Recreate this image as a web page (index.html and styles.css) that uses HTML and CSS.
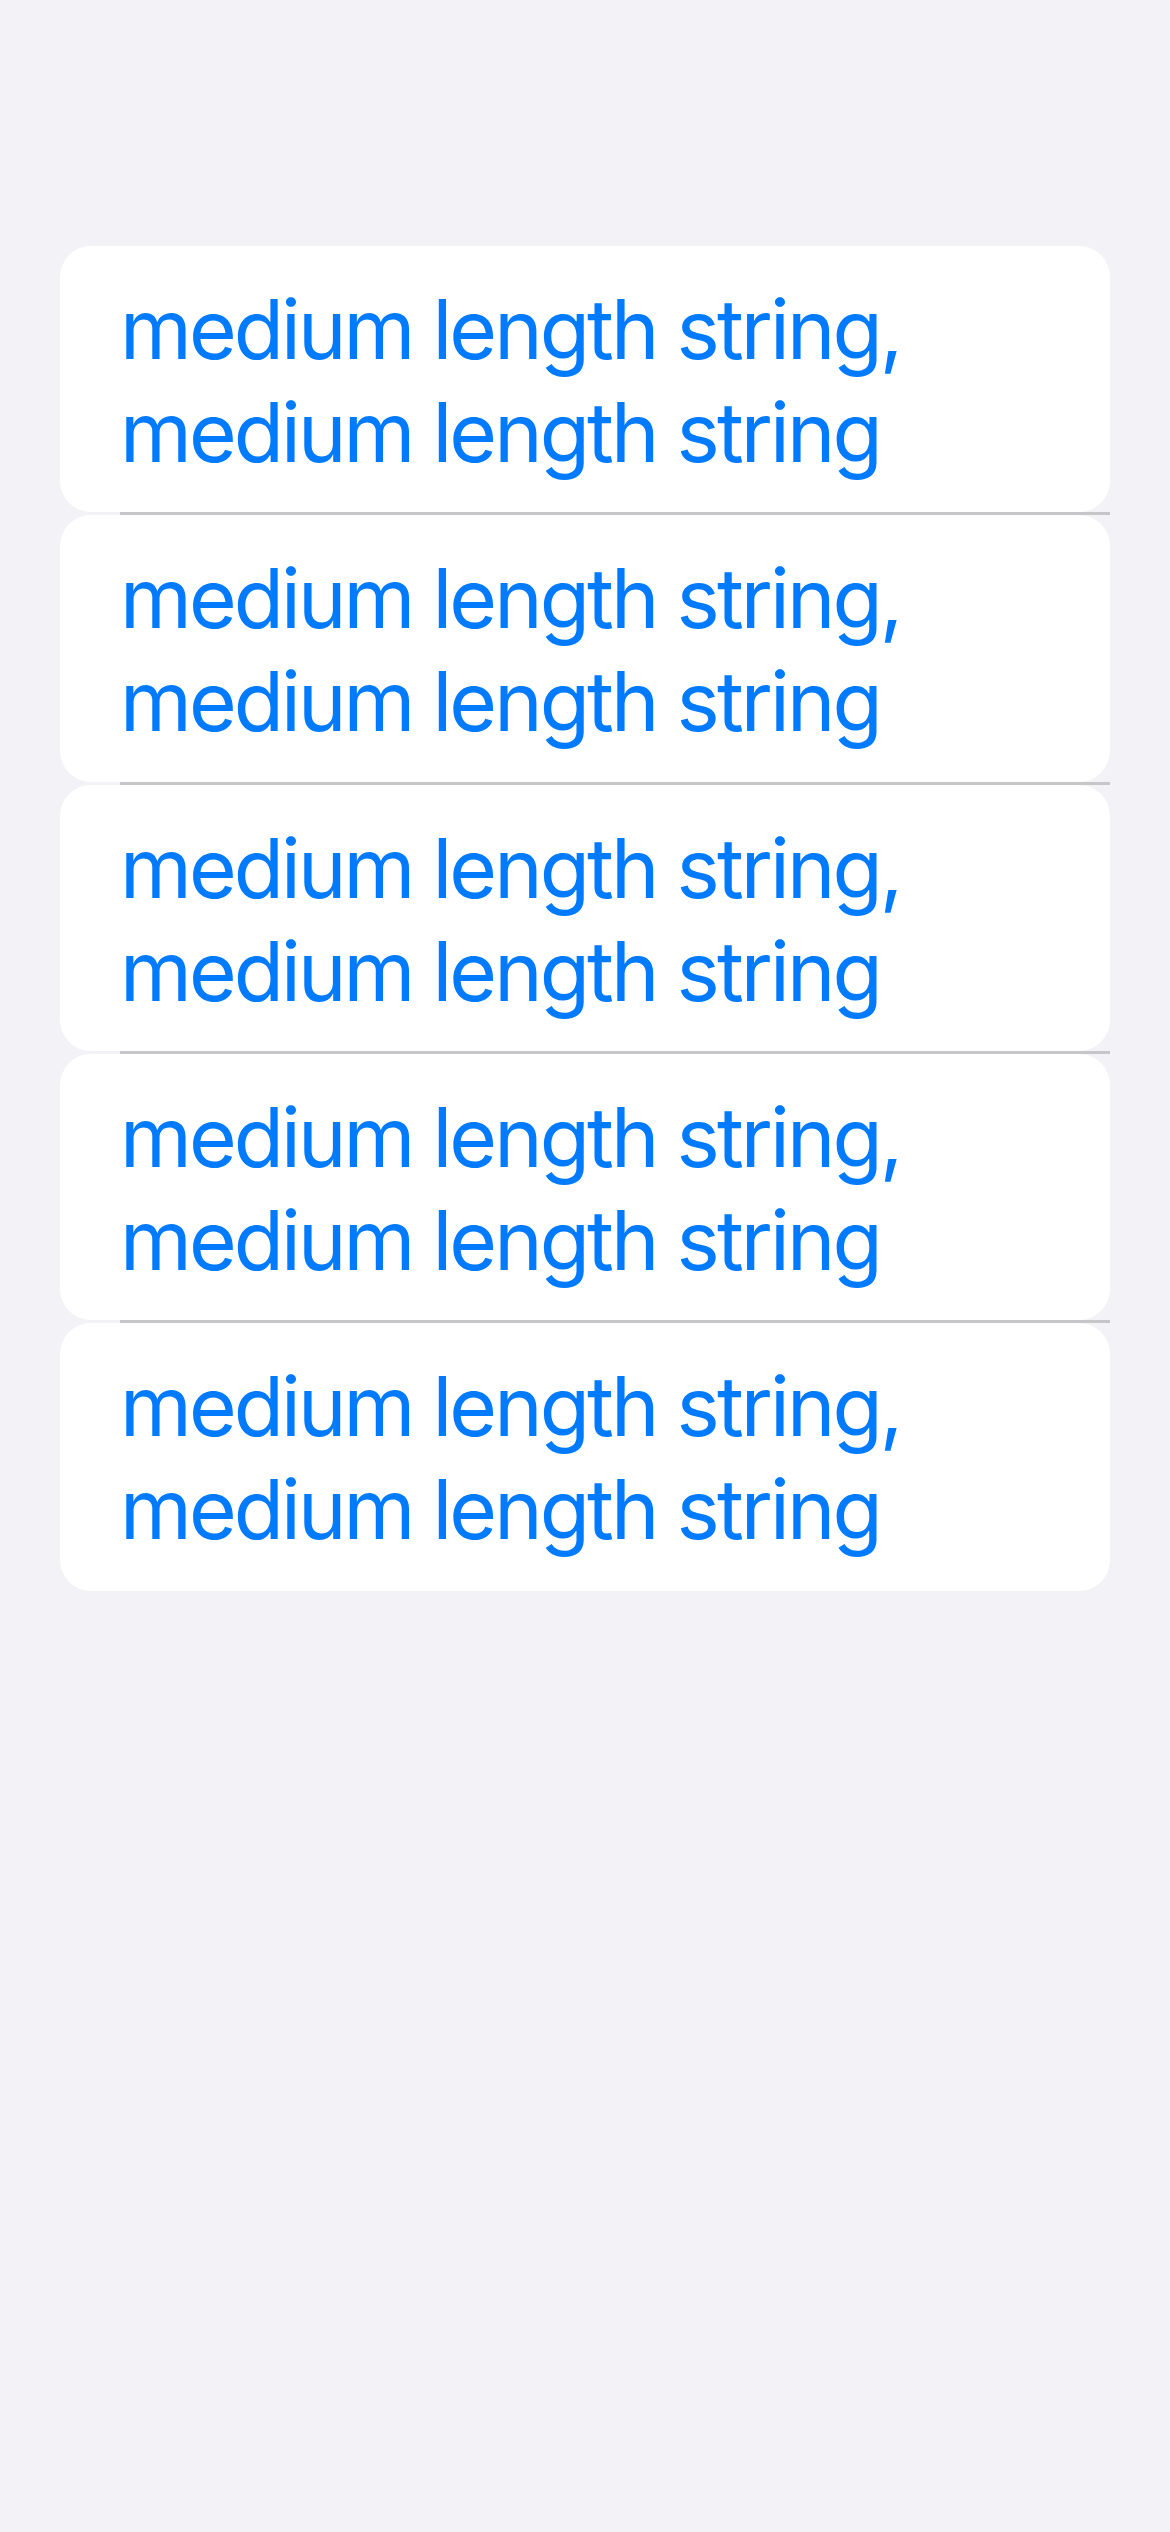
FILE: index.html
```html
<!DOCTYPE html>
<html lang="en">
<head>
<meta charset="utf-8">
<title>List</title>
<link rel="stylesheet" href="styles.css">
</head>
<body>
<main class="screen">
  <section class="list">
    <div class="cell">medium length string, medium length string</div>
    <div class="sep"></div>
    <div class="cell">medium length string, medium length string</div>
    <div class="sep"></div>
    <div class="cell">medium length string, medium length string</div>
    <div class="sep"></div>
    <div class="cell">medium length string, medium length string</div>
    <div class="sep"></div>
    <div class="cell">medium length string, medium length string</div>
  </section>
</main>
</body>
</html>
```
FILE: styles.css
```css
html, body {
  margin: 0;
  padding: 0;
  background: #f2f2f7;
}
.screen {
  width: 1170px;
  min-height: 2532px;
  box-sizing: border-box;
  padding: 246px 60px 0 60px;
}
.list {
  display: flex;
  flex-direction: column;
}
.cell {
  background: #ffffff;
  border-radius: 31px;
  box-sizing: border-box;
  height: 266.25px;
  padding: 32px 60px 0 60px;
  font-family: "Inter", "Noto Sans", sans-serif;
  font-size: 82px;
  line-height: 103px;
  color: #007aff;
  letter-spacing: -2.95px;
}
.sep {
  height: 3px;
  margin-left: 60px;
  background: #c6c6c8;
}
.cell:last-child {
  height: 268px;
}
```
